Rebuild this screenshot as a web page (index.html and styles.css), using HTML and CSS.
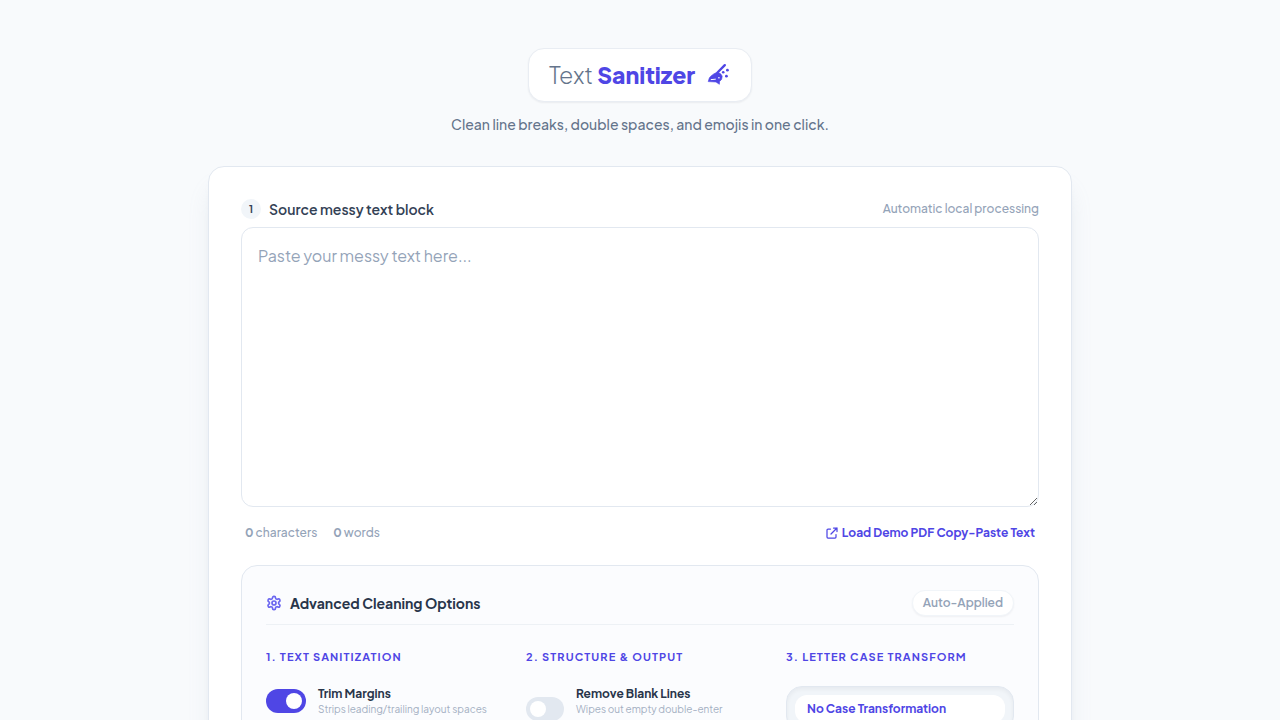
FILE: index.html
```html
<!DOCTYPE html>
<html lang="en">
<head>
<meta charset="utf-8">
<meta name="viewport" content="width=device-width, initial-scale=1">
<title>Text Sanitizer</title>
<link rel="stylesheet" href="styles.css">
</head>
<body>
<div class="page">
  <header class="header">
    <h1 class="brand">
      <span class="brand-name"><span class="brand-light">Text</span> <span class="brand-strong">Sanitizer</span></span>
      <svg class="brand-icon" viewBox="0 0 24 24" aria-hidden="true">
        <path d="M17.8 2.2 10.5 9.5" fill="none" stroke="currentColor" stroke-width="2.4" stroke-linecap="round"/>
        <path d="M1.2 18.6 2.4 14.8C4.2 12.2 6.6 11 8.6 9.9 11 8.8 14.6 10.6 15.2 13.5L14.6 16.4 12.6 18.4 12.4 21.3 10.4 20 9 19Z" fill="currentColor" stroke="currentColor" stroke-width="0.6" stroke-linejoin="round"/>
        <path d="M4.2 16.6 8.4 16.2M11.4 14.8h1" fill="none" stroke="#fff" stroke-width="1" stroke-linecap="round"/>
        <g fill="currentColor"><circle cx="20.4" cy="7.2" r="1.4"/><circle cx="16.2" cy="9.2" r="1.3"/><circle cx="19.4" cy="13.2" r="1.4"/></g>
      </svg>
    </h1>
    <p class="tagline">Clean line breaks, double spaces, and emojis in one click.</p>
  </header>

  <main class="card">
    <div class="source-head">
      <label class="source-label" for="source"><span class="step">1</span>Source messy text block</label>
      <span class="source-note">Automatic local processing</span>
    </div>
    <textarea class="source" id="source" placeholder="Paste your messy text here..."></textarea>
    <div class="source-foot">
      <div class="counts"><span><strong>0</strong> characters</span><span><strong>0</strong> words</span></div>
      <button class="demo" type="button">
        <svg class="demo-icon" viewBox="0 0 24 24" aria-hidden="true"><path d="M9 4H4a2 2 0 0 0-2 2v14a2 2 0 0 0 2 2h14a2 2 0 0 0 2-2v-5M15 2h7v7M22 2 10 14"/></svg>
        Load Demo PDF Copy-Paste Text
      </button>
    </div>

    <section class="options">
      <div class="options-head">
        <h2 class="options-title">
          <svg class="gear" viewBox="0 0 24 24" aria-hidden="true"><path d="M12.22 2h-.44a2 2 0 0 0-2 2v.18a2 2 0 0 1-1 1.73l-.43.25a2 2 0 0 1-2 0l-.15-.08a2 2 0 0 0-2.73.73l-.22.38a2 2 0 0 0 .73 2.73l.15.1a2 2 0 0 1 1 1.72v.51a2 2 0 0 1-1 1.74l-.15.09a2 2 0 0 0-.73 2.73l.22.38a2 2 0 0 0 2.73.73l.15-.08a2 2 0 0 1 2 0l.43.25a2 2 0 0 1 1 1.73V20a2 2 0 0 0 2 2h.44a2 2 0 0 0 2-2v-.18a2 2 0 0 1 1-1.73l.43-.25a2 2 0 0 1 2 0l.15.08a2 2 0 0 0 2.73-.73l.22-.39a2 2 0 0 0-.73-2.73l-.15-.08a2 2 0 0 1-1-1.74v-.5a2 2 0 0 1 1-1.74l.15-.09a2 2 0 0 0 .73-2.73l-.22-.38a2 2 0 0 0-2.73-.73l-.15.08a2 2 0 0 1-2 0l-.43-.25a2 2 0 0 1-1-1.73V4a2 2 0 0 0-2-2Z"/><circle cx="12" cy="12" r="3"/></svg>
          Advanced Cleaning Options
        </h2>
        <span class="badge">Auto-Applied</span>
      </div>
      <div class="columns">
        <div class="column">
          <h3 class="column-title">1. Text Sanitization</h3>
          <label class="option">
            <input class="switch" type="checkbox" checked>
            <span class="option-text"><span class="option-name">Trim Margins</span><span class="option-note">Strips leading/trailing layout spaces</span></span>
          </label>
        </div>
        <div class="column">
          <h3 class="column-title">2. Structure &amp; Output</h3>
          <label class="option option-tall">
            <input class="switch switch-narrow" type="checkbox">
            <span class="option-text"><span class="option-name">Remove Blank Lines</span><span class="option-note">Wipes out empty double-enter</span></span>
          </label>
        </div>
        <div class="column">
          <h3 class="column-title">3. Letter Case Transform</h3>
          <div class="cases">
            <button class="case" type="button" aria-pressed="true">No Case Transformation</button>
          </div>
        </div>
      </div>
    </section>
  </main>
</div>
</body>
</html>
```
FILE: styles.css
```css
* { box-sizing: border-box; }

body {
  margin: 0;
  background: #f8fafc;
  color: #28354a;
  font-family: "Plus Jakarta Sans", Inter, sans-serif;
  font-size: 14px;
  line-height: 20px;
}

h1, h2, h3, p { margin: 0; }
button, textarea { font-family: inherit; }

.page {
  max-width: 896px;
  margin: 0 auto;
  padding: 48px 16px;
}

.header {
  display: flex;
  flex-direction: column;
  align-items: center;
  gap: 12px;
  margin-bottom: 32px;
}

.brand {
  display: flex;
  align-items: center;
  gap: 12px;
  padding: 10px 20px;
  border: 1px solid #e9edf3;
  border-radius: 16px;
  background: #fff;
  box-shadow: 0 1px 2px rgba(15, 23, 42, 0.06);
  font-size: 23px;
  line-height: 32px;
}

.brand-light { color: #64748b; font-weight: 300; }
.brand-strong { color: #4f46e5; font-weight: 800; }
.brand-icon { width: 24px; height: 24px; color: #4f46e5; }
.tagline { color: #64748b; font-weight: 500; }

.card {
  padding: 32px;
  border: 1px solid #e2e8f0;
  border-radius: 16px;
  background: #fff;
  box-shadow: 0 20px 25px -5px rgba(148, 163, 184, 0.2), 0 8px 10px -6px rgba(148, 163, 184, 0.2);
}

.source-head, .source-foot, .options-head {
  display: flex;
  align-items: center;
  justify-content: space-between;
}

.source-head { margin-bottom: 8px; }

.source-label {
  display: flex;
  align-items: center;
  gap: 8px;
  color: #334155;
  font-weight: 600;
}

.step {
  display: grid;
  place-items: center;
  width: 20px;
  height: 20px;
  border-radius: 50%;
  background: #f1f5f9;
  font-size: 10px;
  font-weight: 700;
}

.source-note { color: #94a3b8; font-size: 12px; font-weight: 500; }

.source {
  display: block;
  width: 100%;
  height: 280px;
  padding: 16px;
  border: 1px solid #e2e8f0;
  border-radius: 12px;
  background: #fff;
  color: #1e293b;
  font-size: 16px;
  line-height: 24px;
  resize: vertical;
}

.source::placeholder { color: #94a3b8; opacity: 1; }

.source-foot {
  margin: 16px 0 22px;
  padding: 0 4px;
  color: #94a3b8;
  font-size: 12px;
  font-weight: 500;
}

.counts { display: flex; gap: 16px; }
.counts strong { font-weight: 700; }

.demo {
  display: flex;
  align-items: center;
  gap: 4px;
  padding: 0;
  border: 0;
  background: none;
  color: #4f46e5;
  font-size: 12px;
  font-weight: 700;
  line-height: 20px;
}

.demo-icon, .gear {
  fill: none;
  stroke: currentColor;
  stroke-width: 2;
  stroke-linecap: round;
  stroke-linejoin: round;
}

.demo-icon { width: 12px; height: 12px; stroke-width: 2.5; overflow: visible; }

.options {
  padding: 24px;
  border: 1px solid #e2e8f0;
  border-radius: 16px;
  background: #fbfcfe;
}

.options-head {
  padding-bottom: 8px;
  border-bottom: 1px solid #edf1f5;
}

.options-title {
  display: flex;
  align-items: center;
  gap: 8px;
  font-size: 14px;
  font-weight: 700;
}

.gear { width: 16px; height: 16px; color: #6b66f0; stroke-width: 2.5; }

.badge {
  padding: 4px 10px;
  border: 1px solid #f1f5f9;
  border-radius: 13px;
  background: #fff;
  box-shadow: 0 1px 2px rgba(15, 23, 42, 0.05);
  color: #94a3b8;
  font-size: 12px;
  font-weight: 600;
  line-height: 16px;
}

.columns {
  display: grid;
  grid-template-columns: repeat(3, 1fr);
  gap: 32px;
  padding-top: 24px;
}

.column { min-width: 0; }

.column-title {
  margin-bottom: 21px;
  color: #4f46e5;
  font-size: 11px;
  font-weight: 700;
  line-height: 16px;
  letter-spacing: 0.1em;
  text-transform: uppercase;
}

.option {
  display: flex;
  align-items: center;
  gap: 12px;
}

.option-tall { min-height: 46px; }
.option-text { align-self: flex-start; white-space: nowrap; }
.option-name, .option-note { display: block; }
.option-name { font-size: 12px; font-weight: 700; line-height: 16px; }
.option-note { color: #a3afc2; font-size: 10px; line-height: 14px; }

.switch {
  appearance: none;
  display: flex;
  flex: none;
  align-items: center;
  width: 40px;
  height: 24px;
  margin: 0;
  padding: 4px;
  border-radius: 12px;
  background: #e2e8f0;
}

.switch::before {
  content: "";
  width: 16px;
  height: 16px;
  border-radius: 50%;
  background: #fff;
}

.switch:checked { justify-content: flex-end; background: #4f46e5; }
.switch-narrow { width: 38px; }

.cases {
  padding: 8px;
  border: 1px solid #e2e8f0;
  border-radius: 16px;
  background: #f1f5f9;
  box-shadow: inset 0 2px 4px rgba(15, 23, 42, 0.05);
}

.case {
  width: 100%;
  padding: 6px 12px;
  border: 0;
  border-radius: 12px;
  background: #fff;
  color: #4f46e5;
  font-size: 12px;
  font-weight: 700;
  line-height: 16px;
  text-align: left;
}
```
